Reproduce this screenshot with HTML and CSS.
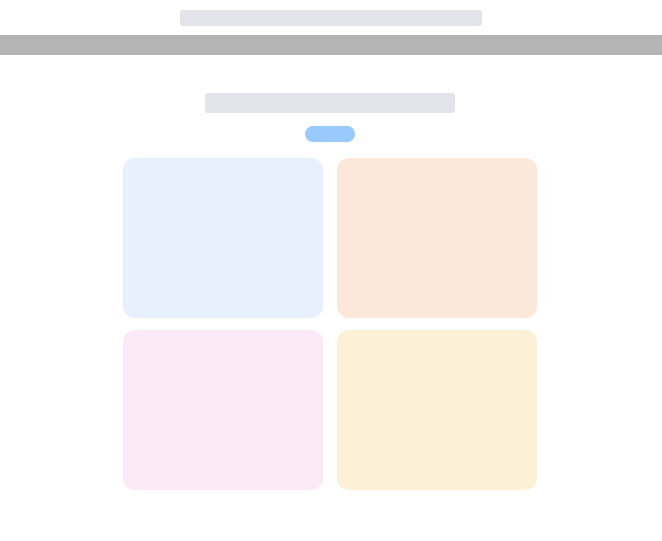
FILE: index.html
```html
<!DOCTYPE html>
<html>
<head>
<meta charset="utf-8">
<link rel="stylesheet" href="styles.css">
</head>
<body>
<header class="top">
  <div class="skel skel-title"></div>
</header>
<div class="band"></div>
<main class="main">
  <div class="skel skel-heading"></div>
  <div class="pill"></div>
  <div class="grid">
    <div class="card card-blue"></div>
    <div class="card card-peach"></div>
    <div class="card card-pink"></div>
    <div class="card card-yellow"></div>
  </div>
</main>
</body>
</html>
```
FILE: styles.css
```css
html, body {
  margin: 0;
  padding: 0;
  background: #ffffff;
  font-family: "Liberation Sans", Arial, sans-serif;
}
.top {
  display: flex;
  justify-content: center;
  padding: 10px 0 8px 0;
}
.skel {
  background: #e3e4e9;
  border-radius: 3px;
}
.skel-title {
  width: 302px;
  height: 16px;
}
.band {
  height: 20px;
  margin-top: 1px;
  background: #b4b4b4;
}
.main {
  display: flex;
  flex-direction: column;
  align-items: center;
  padding-top: 38px;
  padding-right: 2px;
}
.skel-heading {
  width: 250px;
  height: 20px;
}
.pill {
  width: 50px;
  height: 16px;
  border-radius: 8px;
  background: #9ac9fe;
  margin-top: 13px;
}
.grid {
  display: grid;
  grid-template-columns: 200px 200px;
  column-gap: 14px;
  row-gap: 12px;
  margin-top: 16px;
}
.card {
  height: 160px;
  border-radius: 12px;
}
.card-blue { background: #e8effd; }
.card-peach { background: #fce8da; }
.card-pink { background: #fbe9f8; }
.card-yellow { background: #fcf1d6; }
```
